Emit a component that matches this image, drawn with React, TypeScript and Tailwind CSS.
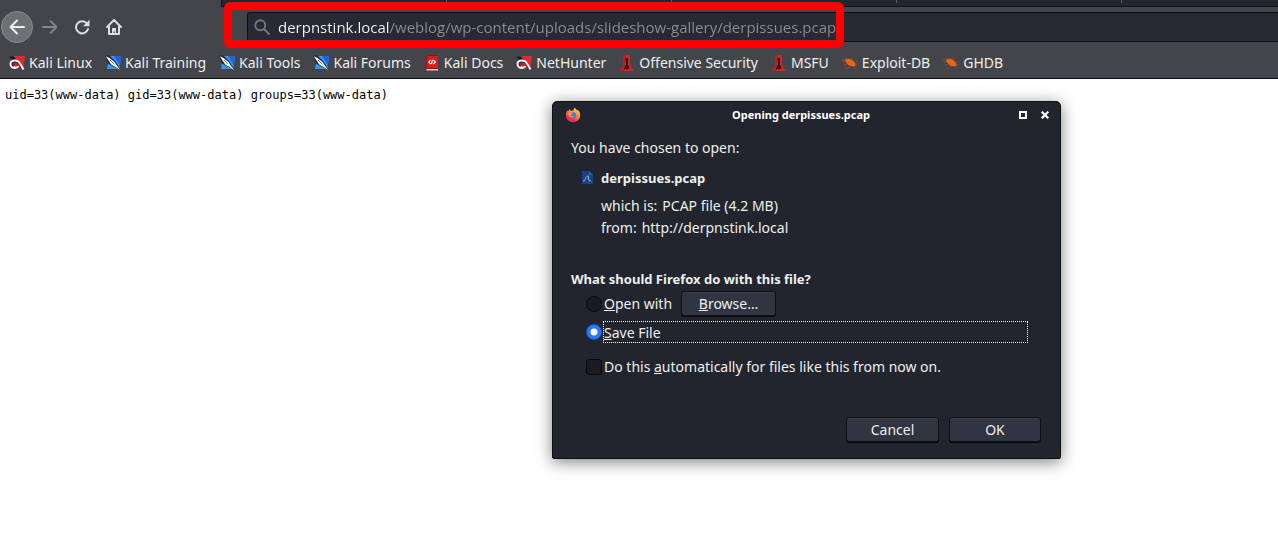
import { useState } from "react";

type IconKind = "dragon" | "knife" | "docs" | "offsec" | "bug";

const bookmarks: { label: string; icon: IconKind }[] = [
  { label: "Kali Linux", icon: "dragon" },
  { label: "Kali Training", icon: "knife" },
  { label: "Kali Tools", icon: "knife" },
  { label: "Kali Forums", icon: "knife" },
  { label: "Kali Docs", icon: "docs" },
  { label: "NetHunter", icon: "dragon" },
  { label: "Offensive Security", icon: "offsec" },
  { label: "MSFU", icon: "offsec" },
  { label: "Exploit-DB", icon: "bug" },
  { label: "GHDB", icon: "bug" },
];

function BookmarkIcon({ kind }: { kind: IconKind }) {
  return (
    <svg viewBox="0 0 16 16" className="size-4 shrink-0" aria-hidden="true">
      {kind === "dragon" && (
        <>
          <path d="M5 1h11l-1.500 12H10z" fill="#e8262d" />
          <path d="M0 1.500h4.500L7 3.500 5 5 2 4z" fill="#1c1e23" />
          <path d="M15 15 11.500 7C9.500 4.200 7 3.800 4.500 4.300 2 4.800.5 6.500.5 9c0 3 2.600 4.700 5.500 4.700 2 0 3.500-.9 4.300-1.800" fill="#26282e" />
          <path d="M14.500 14.500 11 8.500C9.800 6.200 7.500 5.400 5.300 5.600 3 5.800 1.500 7 1.500 9c0 2.400 2 4 4.500 4 1.600 0 3-.7 3.700-1.700" fill="none" stroke="#f6f6f6" strokeWidth="2" />
          <path d="M4 9.400c.2-1.700 2.600-2.300 4.700-1.400l2.300 3.500c-1.500 1.500-7 1-7-2.100z" fill="#c81f27" />
          <path d="M5 11.500c1.500 1.200 3.500 1 4.500-.5" fill="none" stroke="#f6f6f6" strokeWidth="1.500" />
        </>
      )}
      {kind === "knife" && (
        <>
          <path d="M4 1h12l-1.500 13H2z" fill="#3296fa" />
          <path d="M9 1h7l-1 10z" fill="#2266dd" />
          <path d="M0 .5h4.500L10 6l5.500 8.500-3.500-1L3 8.500z" fill="#23262d" />
          <path d="m.8 1.200 3.400 1.500L9.500 7l2 3 3.800 5.200-4.800-3.200-4.300-2.500L3.500 5.500z" fill="#f5f6f7" />
          <path d="m5 5 4 4.200" stroke="#79808c" strokeWidth="1" />
        </>
      )}
      {kind === "docs" && (
        <>
          <path d="M2 1.500 3.500 0H14v16H2z" fill="#8e1218" />
          <path d="M3.500 1H14v12H2.500z" fill="#de1a20" />
          <path d="M2.500 14H14v1.500H2.500z" fill="#f3d9d3" />
          <path d="M6.600 5 4.800 7l2 2M9.400 5l2 2-2 2M8.500 4.800l-1 4.200" fill="none" stroke="#fff" strokeWidth="1.100" />
        </>
      )}
      {kind === "offsec" && (
        <>
          <path d="M4.500 0H11v8.500c.3 2.500 1.500 4 4 7.500H1c2.300-3.500 3.500-5 3.500-7.500z" fill="#d9232a" />
          <path d="M4.500 0H7v3L6 7.500 5.500 16H1c2.300-3.500 3.500-5 3.500-7.500z" fill="#c01e25" />
          <path d="M7.800 3a1.300 1.300 0 0 1 1.200 2L8.500 9.500l1.800 2.500v2h-5v-2l1.800-2.500L6.600 5a1.300 1.300 0 0 1 1.200-2z" fill="#22070a" />
          <path d="M7.800 11v3.500" stroke="#8a1319" strokeWidth="1" />
        </>
      )}
      {kind === "bug" && (
        <>
          <path d="M3.500 4.300c2.500-1 5-.5 7.200 1.200 2.100 1.700 3.300 3.500 2.800 5.300-2 1-5.200.6-7.300-1.100C4 8 2.500 6 3.500 4.300z" fill="#ef6310" />
          <path d="M6 5 4.500 2.500M9 5l1-2.200M12 7.500l3-1M13 9.500l2.500.5M11.500 11l1.500 2.500M8 11l-2 2.300-3 .2M5 9.500 1.500 10M3.500 7 1 6 .5 4.500M4 5l-2.500-.5" fill="none" stroke="#a34f20" strokeWidth=".8" />
        </>
      )}
    </svg>
  );
}

function FirefoxIcon() {
  return (
    <svg viewBox="0 0 16 16" className="size-4" aria-hidden="true">
      <defs>
        <linearGradient id="flame" x1=".85" y1="0" x2=".3" y2="1">
          <stop offset="0" stopColor="#ffe14a" />
          <stop offset=".45" stopColor="#ff8a2b" />
          <stop offset=".8" stopColor="#f5304f" />
          <stop offset="1" stopColor="#e0206f" />
        </linearGradient>
      </defs>
      <path d="M9.500.8c1.300.8 2 1.800 2.300 2.800.5-.2.700-.6.700-1.100 1.700 1.400 2.700 3.600 2.700 5.700 0 4-3.200 7-7.100 7-4 0-7.200-3-7.200-7 0-2 .6-3.800 1.700-5 .1.700.4 1.100.7 1.400C3.600 3.400 4.100 2.500 4.900 2c0 .9.400 1.600 1.300 1.900.7-.3 1.700-.3 2.300 0C8.300 2.700 8.700 1.600 9.500.8z" fill="url(#flame)" />
      <path d="M5.500 6.300c1-.7 2-.5 2.700-1.300 1.900.2 3.300 1.700 3.200 3.500-.1 1.700-1.600 2.900-3.300 2.900S4.900 10 4.900 8.500c0-.8.200-1.500.6-2.200z" fill="#3b7bf0" />
      <path d="M3.600 6c1.200-.6 2.700-.2 3.800.4 0 .8-1.400 1-1.600 1.800.3 1.300 2 1.500 3.300.7-.5 1.600-4.600 2-5.500-.5z" fill="#ff9a2e" />
    </svg>
  );
}

const button =
  "h-[25px] rounded-[3px] border border-[#0e1014] bg-[#313541] text-[14px] leading-[22px] text-[#eeeeec] shadow-[inset_0_1px_0_#3b3f4b,0_1px_0_#08090b]";

function OpenDialog() {
  const [choice, setChoice] = useState("save");
  const radio =
    "size-4 shrink-0 appearance-none rounded-full border border-[#07080a] bg-[#1a1c22] checked:border-[#1658d8] checked:bg-[radial-gradient(circle,#fff_3px,#2777ff_4px)]";
  return (
    <section
      role="dialog"
      aria-labelledby="dialog-title"
      className="absolute top-[101px] left-[552px] w-[509px] rounded-t-[5px] rounded-b-[2px] border border-[#0d0f13] bg-[#23252e] text-[14px] leading-[22px] text-[#eeeeec] shadow-[0_3px_16px_rgba(0,0,0,0.5)]"
    >
      <header className="grid h-[27px] grid-cols-[1fr_auto_1fr] items-center pr-[11px] pb-px pl-3">
        <FirefoxIcon />
        <h1 id="dialog-title" className="pr-3 text-[11px] leading-4 font-bold text-white">
          Opening derpissues.pcap
        </h1>
        <div className="flex justify-end gap-[14px]">
          <button aria-label="Maximize">
            <svg viewBox="0 0 8 8" className="size-2">
              <path d="M1 1h6v6H1z" fill="none" stroke="#fff" strokeWidth="2" />
            </svg>
          </button>
          <button aria-label="Close">
            <svg viewBox="0 0 8 8" className="size-2">
              <path d="m.7.7 6.600 6.600M7.300.7.7 7.300" fill="none" stroke="#fff" strokeWidth="2.200" />
            </svg>
          </button>
        </div>
      </header>
      <div className="px-[18px] pt-2 pb-4">
        <p>You have chosen to open:</p>
        <div className="mt-2 flex items-center gap-[6px] pl-2">
          <svg viewBox="0 0 16 16" className="size-4" aria-hidden="true">
            <path d="M3 1h7l4 4v9H3z" fill="#1b4384" />
            <path d="m10 1 4 4h-4z" fill="#2c66bd" />
            <path d="M4 11c2 0 2-1 2.500-2.500C7 6.500 9.500 5 9.500 6.500V9c0 1.500 1 2 2.500 2" fill="none" stroke="#9dbbe8" strokeWidth="1" />
          </svg>
          <strong className="text-[13px]">derpissues.pcap</strong>
        </div>
        <dl className="mt-[6px] pl-[30px]">
          <div className="flex gap-[5px]">
            <dt>which is:</dt>
            <dd>PCAP file (4.2 MB)</dd>
          </div>
          <div className="flex gap-[5px]">
            <dt>from:</dt>
            <dd>http://derpnstink.local</dd>
          </div>
        </dl>
        <h2 className="mt-[29px] text-[13px] font-bold">What should Firefox do with this file?</h2>
        <div className="mt-px flex items-center pl-[15px]">
          <input id="open-with" type="radio" name="action" className={radio} checked={choice === "open"} onChange={() => setChoice("open")} />
          <label htmlFor="open-with" className="ml-[2px]">
            <u>O</u>pen with
          </label>
          <button className={`${button} ml-[9px] w-[95px]`}>
            <u>B</u>rowse…
          </button>
        </div>
        <div className="mt-[5px] mr-[14px] flex items-center pl-[15px]">
          <input id="save-file" type="radio" name="action" className={radio} checked={choice === "save"} onChange={() => setChoice("save")} />
          <label htmlFor="save-file" className="ml-px h-[22px] flex-1 border border-dotted border-white leading-[22px]">
            <u>S</u>ave File
          </label>
        </div>
        <div className="mt-[13px] flex items-center pl-[15px]">
          <input id="always" type="checkbox" className="size-4 appearance-none rounded-[3px] border border-[#07080a] bg-[#1a1c22] checked:bg-[#2777ff]" />
          <label htmlFor="always" className="ml-[2px]">
            Do this <u>a</u>utomatically for files like this from now on.
          </label>
        </div>
        <div className="mt-[39px] flex justify-end gap-[10px] pr-px">
          <button className={`${button} w-[93px]`}>Cancel</button>
          <button className={`${button} w-[92px]`}>OK</button>
        </div>
      </div>
    </section>
  );
}

export default function App() {
  return (
    <div className="relative min-h-screen overflow-hidden bg-white font-['Noto_Sans',sans-serif]">
      <header className="border-b border-[#0c0d10] bg-[#43454b]">
        <div className="flex h-[7px]">
          <div className="w-[221px] shrink-0" />
          <div className="flex flex-1 border-b border-l border-[#111318] bg-[#23252e]">
            <div className="h-[3px] w-[225px] border-r border-[#5a5c64]" />
            <div className="h-[3px] w-[225px] border-r border-[#5a5c64]" />
            <div className="h-[3px] w-[225px] border-r border-[#5a5c64]" />
            <div className="h-[3px] w-[225px] border-r border-[#5a5c64]" />
          </div>
        </div>
        <div className="flex h-10 items-center">
          <nav className="flex w-[247px] shrink-0 items-center">
            <button aria-label="Back" className="ml-px flex size-8 items-center justify-center rounded-full border border-[#8b8c90] bg-[#6e7074]">
              <svg viewBox="0 0 16 16" className="size-4">
                <path d="M15 8H1.500M8 1.500 1.500 8 8 14.500" fill="none" stroke="#ededee" strokeWidth="2" strokeLinecap="round" strokeLinejoin="round" />
              </svg>
            </button>
            <button aria-label="Forward" className="ml-[9px]">
              <svg viewBox="0 0 16 16" className="size-4">
                <path d="M1 8h13.500M8.500 2l6 6-6 6" fill="none" stroke="#85868a" strokeWidth="1.800" strokeLinecap="round" strokeLinejoin="round" />
              </svg>
            </button>
            <button aria-label="Reload" className="ml-4">
              <svg viewBox="0 0 16 16" className="size-4">
                <path d="M13 4.600A6.100 6.100 0 1 0 14 10" fill="none" stroke="#dededf" strokeWidth="2" strokeLinecap="round" />
                <path d="M15.500.8v6.400H9z" fill="#dededf" />
              </svg>
            </button>
            <button aria-label="Home" className="ml-4">
              <svg viewBox="0 0 16 16" className="size-4">
                <path d="m1 8 7-7 7 7M3 7.500V15h10V7.500" fill="none" stroke="#dededf" strokeWidth="2" strokeLinecap="round" strokeLinejoin="round" />
                <path d="M6 15V9h4v6H8.700v-2.500H7.500V15z" fill="#dededf" />
              </svg>
            </button>
          </nav>
          <div className="relative flex h-[30px] flex-1 items-center rounded-l-[3px] border border-r-0 border-[#0e1014] bg-[#272934] pl-[6px]">
            <svg viewBox="0 0 16 16" className="size-4 shrink-0" aria-hidden="true">
              <path d="M11.300 6.300a5 5 0 1 1-10 0 5 5 0 0 1 10 0zM10 10l5 5" fill="none" stroke="#76777e" strokeWidth="1.900" strokeLinecap="round" />
            </svg>
            <input
              aria-label="Address"
              defaultValue="derpnstink.local/weblog/wp-content/uploads/slideshow-gallery/derpissues.pcap"
              className="ml-2 min-w-0 flex-1 bg-[linear-gradient(90deg,#f9f9fa_112px,#8d8e93_112px)] bg-clip-text font-['Open_Sans',sans-serif] text-[15px] leading-[22px] text-transparent outline-none"
            />
            <div className="pointer-events-none absolute -top-[11px] -left-6 h-[46px] w-[620px] rounded-[6px] border-8 border-[#fe0000]" />
          </div>
        </div>
        <ul className="flex h-[31px] items-center gap-[13px] pl-[9px] text-[14px] leading-[22px] text-[#eeeeec]">
          {bookmarks.map((b) => (
            <li key={b.label}>
              <a href="#" className="flex items-center gap-1 whitespace-nowrap">
                <BookmarkIcon kind={b.icon} />
                {b.label}
              </a>
            </li>
          ))}
        </ul>
      </header>
      <main>
        <pre className="px-[5px] py-2 font-['DejaVu_Sans_Mono',monospace] text-[12px] leading-4 text-black">
          uid=33(www-data) gid=33(www-data) groups=33(www-data)
        </pre>
      </main>
      <OpenDialog />
    </div>
  );
}
